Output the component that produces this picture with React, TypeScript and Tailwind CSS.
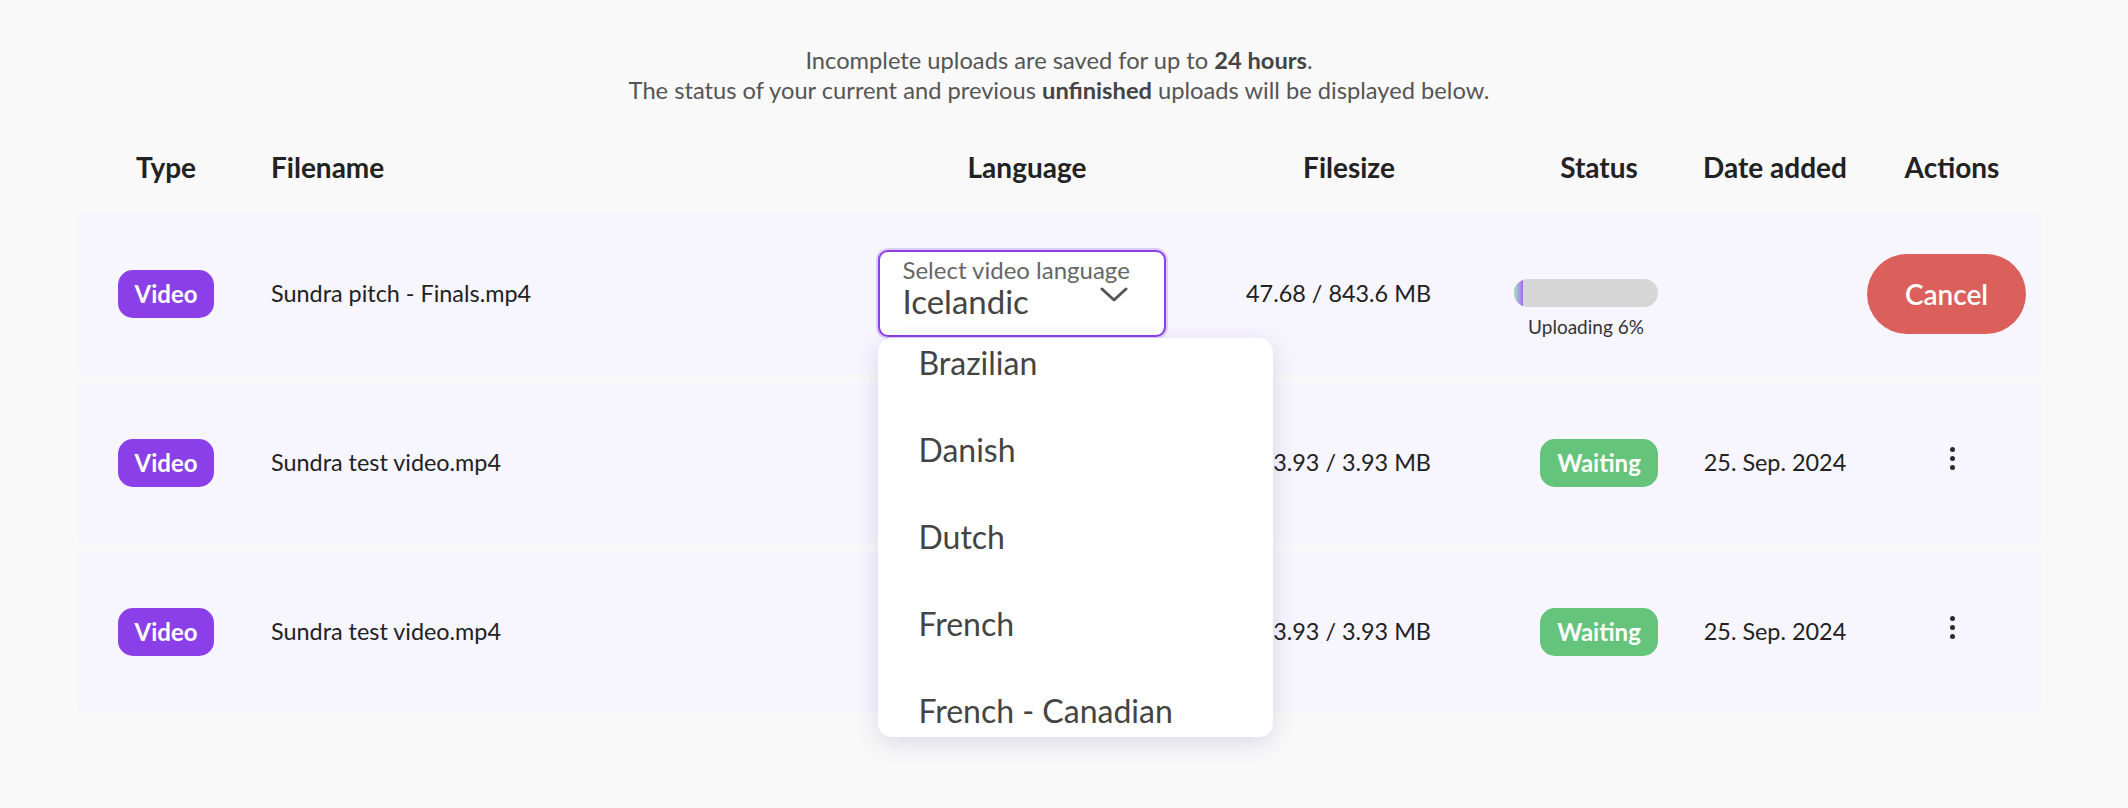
import React from "react";

const languages = ["Brazilian", "Danish", "Dutch", "French", "French - Canadian"];

const cols = "grid grid-cols-[178px_612px_320px_324px_176px_176px_178px]";

const Badge: React.FC<{ label: string; className: string }> = ({ label, className }) => (
  <span
    className={`inline-flex items-center justify-center rounded-[15px] text-white font-bold text-[24px] leading-none ${className}`}
  >
    {label}
  </span>
);

const Kebab = () => (
  <div className="flex flex-col items-center gap-[4px] -mt-2">
    <span className="w-[5px] h-[5px] rounded-full bg-[#2a2a2a]" />
    <span className="w-[5px] h-[5px] rounded-full bg-[#2a2a2a]" />
    <span className="w-[5px] h-[5px] rounded-full bg-[#2a2a2a]" />
  </div>
);

const LanguageSelect = () => (
  <div className="relative w-[288px] mr-[11px]">
    <div className="relative h-[87px] rounded-[10px] border-2 border-[#8b3fe8] bg-white shadow-[0_0_0_2px_rgba(139,63,232,0.22)] pl-[23px] pt-[5px]">
      <div className="text-[24px] leading-[25px] text-[#666]">Select video language</div>
      <div className="mt-[2px] text-[33px] leading-[35px] text-[#444]">Icelandic</div>
      <svg
        className="absolute right-[36px] top-[35px]"
        width="28"
        height="15"
        viewBox="0 0 28 15"
        fill="none"
      >
        <path d="M2 2 L14 13 L26 2" stroke="#555" strokeWidth="3" strokeLinecap="round" strokeLinejoin="round" />
      </svg>
    </div>
    <div className="absolute left-0 top-[88px] z-10 w-[395px] h-[399px] overflow-hidden rounded-[14px] bg-white shadow-[0_6px_24px_rgba(70,50,130,0.16)]">
      <div className="-mt-[19px]">
        {languages.map((l) => (
          <div key={l} className="h-[87px] flex items-center pl-[41px] text-[32px] text-[#444]">
            {l}
          </div>
        ))}
      </div>
    </div>
  </div>
);

const App: React.FC = () => {
  return (
    <div className="min-h-[808px] bg-[#f9f9f9] font-['Lato',sans-serif] pl-[77px] pr-[87px] pt-[45px]">
      <div className="text-center text-[23.7px] leading-[30px] text-[#555]">
        <p>
          Incomplete uploads are saved for up to <span className="font-bold text-[#444]">24 hours</span>.
        </p>
        <p>
          The status of your current and previous <span className="font-bold text-[#444]">unfinished</span> uploads
          will be displayed below.
        </p>
      </div>

      <div className={`${cols} mt-4 h-[92px] items-center text-[28px] font-bold text-[#222]`}>
        <div className="text-center">Type</div>
        <div className="pl-4">Filename</div>
        <div className="text-center">Language</div>
        <div className="text-center">Filesize</div>
        <div className="text-center">Status</div>
        <div className="text-center">Date added</div>
        <div className="text-center">Actions</div>
      </div>

      <div className="flex flex-col gap-[8px] text-[23.4px] text-[#222]">
        {/* uploading row */}
        <div className={`${cols} h-[161px] items-center rounded-[4px] bg-[#f7f5fe]`}>
          <div className="flex justify-center">
            <Badge label="Video" className="w-[96px] h-[48px] bg-[#8b3fe8]" />
          </div>
          <div className="pl-4">Sundra pitch - Finals.mp4</div>
          <div className="flex justify-center">
            <LanguageSelect />
          </div>
          <div className="text-right pr-[80px]">47.68 / 843.6 MB</div>
          <div className="flex justify-end pr-[29px]">
            <div className="flex flex-col items-center pt-[30px]">
              <div className="w-[144px] h-[28px] rounded-full bg-[#d6d6d6] overflow-hidden">
                <div className="h-full w-[6%] bg-gradient-to-r from-[#9fe3bd] to-[#a765f0]" />
              </div>
              <div className="mt-[9px] text-[19px] leading-[22px] text-[#333]">Uploading 6%</div>
            </div>
          </div>
          <div />
          <div className="flex justify-center">
            <button className="mr-[11px] w-[159px] h-[80px] rounded-full bg-[#db5f5a] text-white text-[28px] font-semibold">
              Cancel
            </button>
          </div>
        </div>

        {[0, 1].map((i) => (
          <div key={i} className={`${cols} h-[161px] items-center rounded-[4px] bg-[#f7f5fe]`}>
            <div className="flex justify-center">
              <Badge label="Video" className="w-[96px] h-[48px] bg-[#8b3fe8]" />
            </div>
            <div className="pl-4">Sundra test video.mp4</div>
            <div />
            <div className="text-right pr-[80px]">3.93 / 3.93 MB</div>
            <div className="flex justify-end pr-[29px]">
              <Badge label="Waiting" className="w-[118px] h-[48px] bg-[#64c47b]" />
            </div>
            <div className="text-center">25. Sep. 2024</div>
            <div className="flex justify-center">
              <Kebab />
            </div>
          </div>
        ))}
      </div>
    </div>
  );
};

export default App;
